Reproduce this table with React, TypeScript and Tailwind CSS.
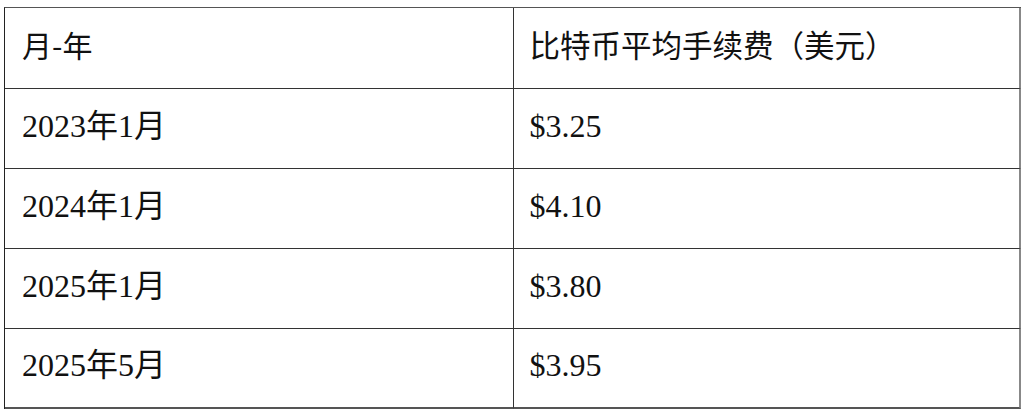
import React from "react";

const rows: [string, string][] = [
  ["2023年1月", "$3.25"],
  ["2024年1月", "$4.10"],
  ["2025年1月", "$3.80"],
  ["2025年5月", "$3.95"],
];

const font = {
  fontFamily: '"Liberation Serif", "Noto Sans CJK SC", serif',
};
const cjk = { fontFamily: '"Noto Sans CJK SC", sans-serif' };

export default function App() {
  return (
    <div className="w-[1024px] h-[411px] bg-white overflow-hidden">
      <div
        className="mt-[7px] ml-[4px] w-[1017px] border-t border-l border-t-[#555] border-l-[#222] text-[32px] text-[#111]"
        style={font}
      >
        <div className="flex h-[81px]">
          <div className="w-[509px] flex items-center pl-[17px] pb-[7px] border-r border-b border-[#333]" style={cjk}>
            <span className="text-[30px]">月-年</span>
          </div>
          <div className="w-[508px] flex items-center pl-[16px] pb-[7px] border-r-2 border-b border-r-[#888] border-b-[#333]" style={cjk}>
            <span className="text-[30.5px]">比特币平均手续费（美元）</span>
          </div>
        </div>
        {rows.map(([a, b], i) => (
          <div key={i} className="flex h-[80px]">
            <div
              className={`w-[509px] flex items-center pl-[17px] pb-[6px] border-r border-b border-r-[#333] ${
                i === rows.length - 1 ? "border-b-2 border-b-[#555]" : "border-b-[#333]"
              }`}
            >
              {a}
            </div>
            <div
              className={`w-[508px] flex items-center pl-[16px] pb-[6px] border-r-2 border-r-[#888] border-b ${
                i === rows.length - 1 ? "border-b-2 border-b-[#555]" : "border-b-[#333]"
              }`}
            >
              {b}
            </div>
          </div>
        ))}
      </div>
    </div>
  );
}
